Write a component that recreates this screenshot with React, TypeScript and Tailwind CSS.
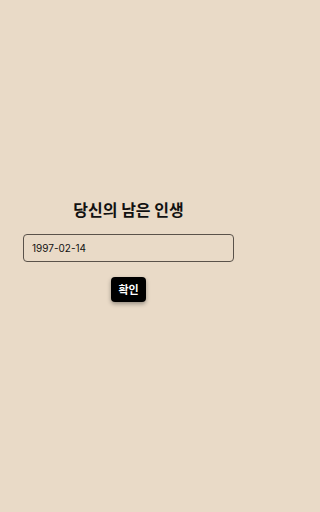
import { useState } from 'react';

export default function App(): React.JSX.Element {
  const [birth, setBirth] = useState('1997-02-14');

  return (
    <div className="min-h-screen w-full bg-[#e9dac7]">
      <main
        className="min-h-screen w-[257px] flex flex-col items-center justify-center px-[23px] pb-[13px]"
        style={{ fontFamily: 'Inter, "Noto Sans CJK KR", sans-serif' }}
      >
        <h1 className="text-base leading-6 font-bold text-[#111] font-['Noto_Sans_CJK_KR',sans-serif]">
          당신의 남은 인생
        </h1>

        <input
          type="text"
          value={birth}
          onChange={(e) => setBirth(e.target.value)}
          className="mt-[13px] w-full h-[28px] rounded-[4px] border border-[#5a524a] bg-transparent px-[8px] text-[10px] text-[#111] font-['Inter',sans-serif] outline-none"
        />

        <button
          type="button"
          className="mt-[15px] h-[25px] px-[7px] rounded-[4px] bg-black text-white text-[11px] font-bold shadow-[0_2px_4px_rgba(0,0,0,0.35)] font-['Noto_Sans_CJK_KR',sans-serif]"
        >
          확인
        </button>
      </main>
    </div>
  );
}
